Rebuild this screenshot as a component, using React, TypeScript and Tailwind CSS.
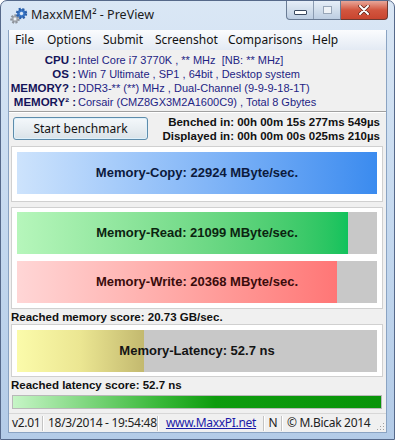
const tah = "font-['Liberation_Sans','DejaVu_Sans',sans-serif]";
const seg = "font-['Noto_Sans','Open_Sans',sans-serif]";

function GearsIcon() {
  return (
    <svg width="20" height="18" viewBox="0 0 20 18">
      {/* gray gear */}
      <circle cx="6" cy="12" r="3.6" fill="#a8adb4" stroke="#8d939b" strokeWidth="2.4" strokeDasharray="1.8 1.4" />
      <circle cx="6" cy="12" r="1.4" fill="#eef2f6" />
      {/* blue gear */}
      <circle cx="12.5" cy="6.5" r="4.4" fill="#3a78c8" stroke="#2b5fa8" strokeWidth="2.6" strokeDasharray="2 1.5" />
      <circle cx="12.5" cy="6.5" r="1.7" fill="#dbe8f6" />
    </svg>
  );
}

function TitleBar() {
  return (
    <div className="h-[29px] flex items-start shrink-0">
      <div className="flex items-center h-full pl-[8px] gap-[1px]">
        <GearsIcon />
        <span className={`${seg} text-[12.5px] text-[#1b1b1b] ml-[1px]`}>MaxxMEM² - PreView</span>
      </div>
      <div className="ml-auto mr-[6px] flex">
        <div className="flex h-[19px] rounded-bl-[4px] border border-t-0 border-[#6a7c95] bg-gradient-to-b from-[#e6eef8] via-[#d2deec] to-[#bccde2] overflow-hidden">
          <div className="w-[27px] flex items-center justify-center border-r border-[#8b9bb1]">
            <div className="w-[13px] h-[5px] mt-[5px] bg-white border border-[#3b4a60] rounded-[1px]" />
          </div>
          <div className="w-[26px] flex items-center justify-center">
            <div className="w-[9px] h-[8px] border border-[#98a6b8] bg-[#eef2f7]" />
          </div>
        </div>
        <div className="w-[47px] h-[19px] rounded-br-[4px] border border-l-0 border-t-0 border-[#6e3a32] bg-gradient-to-b from-[#e7a699] via-[#d2563f] to-[#c9452f] flex items-center justify-center">
          <svg width="12" height="10" viewBox="0 0 12 10">
            <path d="M2 1 L10 9 M10 1 L2 9" stroke="#5a2218" strokeWidth="3.4" strokeLinecap="round" />
            <path d="M2 1 L10 9 M10 1 L2 9" stroke="#ffffff" strokeWidth="2" strokeLinecap="round" />
          </svg>
        </div>
      </div>
    </div>
  );
}

const menuItems: [string, string][] = [
  ['File', 'w-[32px]'],
  ['Options', 'w-[56px]'],
  ['Submit', 'w-[52px]'],
  ['Screenshot', 'w-[73px]'],
  ['Comparisons', 'w-[84px]'],
  ['Help', 'w-[40px]'],
];

const infoRows: [string, string][] = [
  ['CPU :', 'Intel Core i7 3770K , ** MHz\u00a0\u00a0[NB: ** MHz]'],
  ['OS :', 'Win 7 Ultimate , SP1 , 64bit , Desktop system'],
  ['MEMORY? :', 'DDR3-** (**) MHz , Dual-Channel (9-9-9-18-1T)'],
  ['MEMORY² :', 'Corsair (CMZ8GX3M2A1600C9) , Total 8 Gbytes'],
];

function Bar({ text, fill, fillW, color }: { text: string; fill: string; fillW: string; color: string }) {
  return (
    <div className="relative w-[360px] h-[42px] bg-[#c8c8c8] flex">
      <div className={`h-full ${fillW} ${fill}`} />
      <div className={`absolute inset-0 flex items-center justify-center ${tah} font-bold text-[13px] ${color}`}>
        {text}
      </div>
    </div>
  );
}

function StatusSep() {
  return <div className="w-[2px] h-[15px] border-l border-[#c4c4c4] border-r border-r-white" />;
}

export default function App() {
  return (
    <div className="w-[395px] h-[440px] bg-white">
      <div className="w-[395px] h-[440px] rounded-t-[7px] border border-[#56698a] bg-gradient-to-b from-[#dae7f5] via-[#c5d9ef] to-[#b3cbe7] flex flex-col">
        <TitleBar />
        <div className="mx-[7px] h-[403px] shrink-0 bg-[#f0f0f0] border-x border-b border-[#8aa3c2] flex flex-col">
          {/* Menu */}
          <div className={`h-[20px] shrink-0 flex items-center bg-gradient-to-b from-[#fbfcfe] to-[#e3eaf4] ${seg} text-[12px] text-[#111]`}>
            {menuItems.map(([m, w]) => (
              <div key={m} className={`${w} pl-[6px]`}>{m}</div>
            ))}
          </div>

          {/* System info */}
          <div className={`pt-[3px] pb-[2px] ${tah} text-[11px] leading-[14px]`}>
            {infoRows.map(([l, v]) => (
              <div key={l} className="grid grid-cols-[67px_1fr]">
                <div className="text-right font-bold text-[11.5px] text-[#14145a]">{l}</div>
                <div className="pl-[2px] text-[#1e2484] whitespace-nowrap">{v}</div>
              </div>
            ))}
          </div>
          <div className="h-[2px] border-t border-[#a0a0a0] border-b border-b-white" />

          {/* Start / timings */}
          <div className="h-[33px] shrink-0 flex items-start">
            <button className={`ml-[4px] mt-[4px] w-[135px] h-[23px] rounded-[3px] border border-[#5d8cab] bg-gradient-to-b from-[#f4f8fb] via-[#e8eef2] to-[#d9e2e8] ${seg} text-[12px] text-[#111] shadow-[inset_0_0_0_1px_#dff1fb]`}>
              Start benchmark
            </button>
            <div className={`ml-auto mr-[6px] mt-[2px] ${tah} font-bold text-[11.5px] leading-[14px] text-[#111] text-right whitespace-nowrap`}>
              <div>Benched in: 00h 00m 15s 277ms 549µs</div>
              <div>Displayed in: 00h 00m 00s 025ms 210µs</div>
            </div>
          </div>

          {/* Copy */}
          <div className="ml-[2px] w-[372px] h-[56px] shrink-0 border border-[#d0d0d0] bg-white pt-[5px] pl-[5px]">
            <Bar
              text="Memory-Copy: 22924 MByte/sec."
              fill="bg-gradient-to-r from-[#cde3fc] to-[#3a8bef]"
              fillW="w-[360px]"
              color="text-[#0c1a3c]"
            />
          </div>

          {/* Read / Write */}
          <div className="ml-[2px] mt-[5px] w-[372px] h-[102px] shrink-0 border border-[#d0d0d0] bg-white pt-[4px] pl-[5px] flex flex-col gap-[7px]">
            <Bar
              text="Memory-Read: 21099 MByte/sec."
              fill="bg-gradient-to-r from-[#b6f6bb] to-[#10c25c]"
              fillW="w-[331px]"
              color="text-[#0b2410]"
            />
            <Bar
              text="Memory-Write: 20368 MByte/sec."
              fill="bg-gradient-to-r from-[#ffd6d6] to-[#ff7676]"
              fillW="w-[320px]"
              color="text-[#3a0c0c]"
            />
          </div>

          <div className={`mt-[1px] pl-[2px] h-[14px] leading-[14px] ${tah} font-bold text-[11.5px] text-[#111]`}>
            Reached memory score: 20.73 GB/sec.
          </div>

          {/* Latency */}
          <div className="ml-[2px] w-[372px] h-[53px] shrink-0 border border-[#d0d0d0] bg-white pt-[5px] pl-[5px]">
            <Bar
              text="Memory-Latency: 52.7 ns"
              fill="bg-gradient-to-r from-[#fbfbaa] via-[#ebe692] to-[#c3b96f]"
              fillW="w-[127px]"
              color="text-[#141414]"
            />
          </div>

          <div className={`mt-[1px] pl-[2px] h-[14px] leading-[14px] ${tah} font-bold text-[11.5px] text-[#111]`}>
            Reached latency score: 52.7 ns
          </div>

          {/* Progress */}
          <div className="ml-[3px] mt-[3px] w-[370px] h-[14px] shrink-0 border border-[#b9b9b9] bg-[linear-gradient(to_right,#c6f5c6,#38b838_40%,#0e9c0e_55%,#089408)]" />

          {/* Status bar */}
          <div className={`mt-[4px] h-[19px] shrink-0 border-t border-[#d7d7d7] flex items-center ${seg} text-[12px] tracking-[-0.3px] text-[#222] whitespace-nowrap`}>
            <div className="w-[33px] pl-[3px]">v2.01</div>
            <StatusSep />
            <div className="w-[113px] pl-[4px]">18/3/2014 - 19:54:48</div>
            <StatusSep />
            <div className="w-[104px] text-center text-[#1a1aa8] underline">www.MaxxPI.net</div>
            <StatusSep />
            <div className="w-[16px] text-center">N</div>
            <StatusSep />
            <div className="pl-[4px]">© M.Bicak 2014</div>
            <svg className="ml-auto mr-[1px] self-end mb-[1px]" width="9" height="9" viewBox="0 0 9 9">
              <rect x="7" y="1" width="1" height="1" fill="#a0a0a0" />
              <rect x="4" y="4" width="1" height="1" fill="#a0a0a0" />
              <rect x="7" y="4" width="1" height="1" fill="#a0a0a0" />
              <rect x="1" y="7" width="1" height="1" fill="#a0a0a0" />
              <rect x="4" y="7" width="1" height="1" fill="#a0a0a0" />
              <rect x="7" y="7" width="1" height="1" fill="#a0a0a0" />
            </svg>
          </div>
        </div>
      </div>
    </div>
  );
}
